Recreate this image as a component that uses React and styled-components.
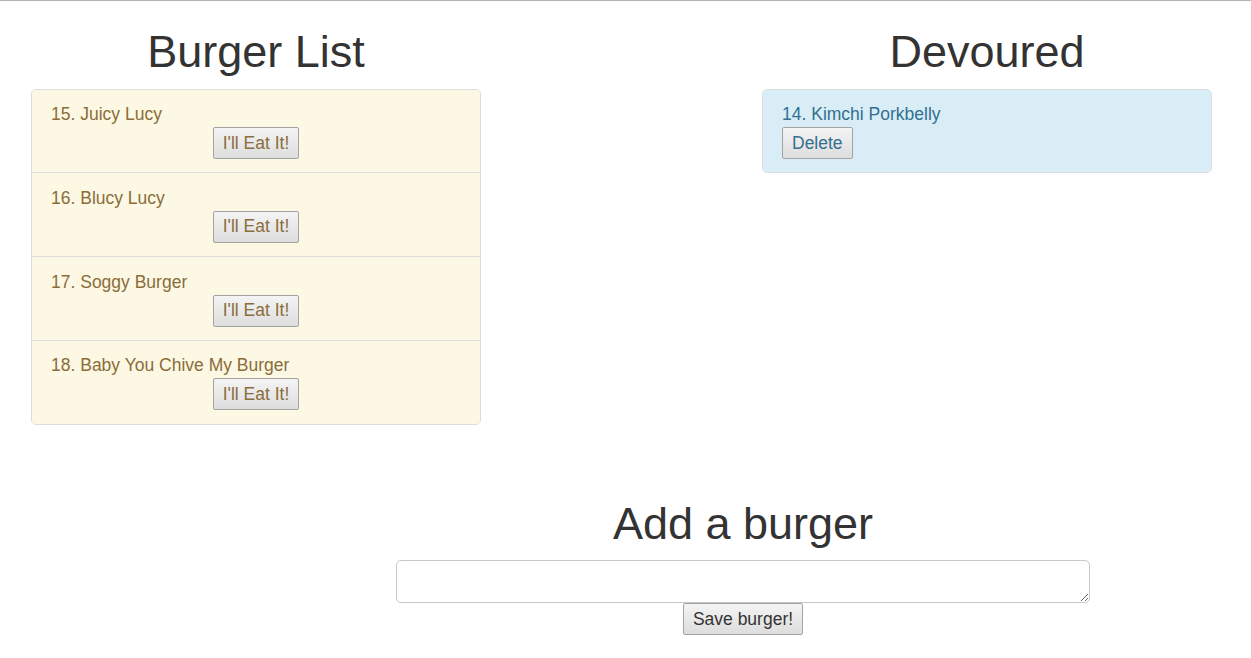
import React from "react";
import styled, { createGlobalStyle } from "styled-components";

const Global = createGlobalStyle`
  html, body { margin: 0; padding: 0; background: #fff; }
  body {
    font-family: "Liberation Sans", Arial, Helvetica, sans-serif;
    font-size: 17.5px;
    line-height: 25px;
    color: #333;
  }
`;

const Page = styled.div`
  border-top: 1px solid #b4b4b4;
  min-height: 657px;
`;

const TopRow = styled.div`
  display: flex;
  padding-left: 31px;
  gap: 281px;
`;

const Column = styled.section`
  width: 450px;
  display: flex;
  flex-direction: column;
`;

const Heading = styled.h1`
  margin: ${(p) => p.$mt || 26}px 0 12px;
  font-size: 45px;
  font-weight: 500;
  line-height: 49.5px;
  text-align: center;
  color: #333;
`;

const ListGroup = styled.ul`
  margin: 0;
  padding: 0;
  list-style: none;
  border: 1px solid #ddd;
  border-radius: 5px;
  overflow: hidden;
`;

const palette = {
  warning: { color: "#8a6d3b", bg: "#fcf8e3" },
  info: { color: "#31708f", bg: "#d9edf7" },
};

const Item = styled.li`
  padding: 12.5px 19px 13.25px;
  background: ${(p) => palette[p.$variant].bg};
  color: ${(p) => palette[p.$variant].color};
  border-top: 1px solid #ddd;
  display: flex;
  flex-direction: column;
  align-items: ${(p) => (p.$center ? "center" : "flex-start")};
  &:first-child { border-top: none; }
`;

const ItemText = styled.div`
  align-self: stretch;
  text-align: left;
  line-height: 25px;
  height: 25px;
`;

const Button = styled.button`
  font-family: inherit;
  font-size: 17.5px;
  line-height: 25px;
  height: 32px;
  padding: 0 9px;
  margin: 0;
  color: ${(p) => p.$color || "#333"};
  background: linear-gradient(#f4f4f4, #dddddd);
  border: 1px solid #a3a3a3;
  border-radius: 2px;
  cursor: pointer;
`;

const FormSection = styled.section`
  margin-left: 396px;
  width: 694px;
  display: flex;
  flex-direction: column;
  align-items: center;
`;

const TextArea = styled.textarea`
  display: block;
  box-sizing: border-box;
  width: 694px;
  height: 43px;
  margin: 0;
  border: 1px solid #c8c8c8;
  border-radius: 5px;
  font-family: inherit;
  font-size: 17.5px;
  background: #fff;
  resize: both;
`;

const burgers = [
  { id: 15, name: "Juicy Lucy" },
  { id: 16, name: "Blucy Lucy" },
  { id: 17, name: "Soggy Burger" },
  { id: 18, name: "Baby You Chive My Burger" },
];

const devoured = [{ id: 14, name: "Kimchi Porkbelly" }];

export default function App() {
  return (
    <Page>
      <Global />
      <TopRow>
        <Column>
          <Heading>Burger List</Heading>
          <ListGroup>
            {burgers.map((b) => (
              <Item key={b.id} $variant="warning" $center>
                <ItemText>
                  {b.id}. {b.name}
                </ItemText>
                <Button $color="#8a6d3b">I'll Eat It!</Button>
              </Item>
            ))}
          </ListGroup>
        </Column>
        <Column>
          <Heading>Devoured</Heading>
          <ListGroup>
            {devoured.map((b) => (
              <Item key={b.id} $variant="info">
                <ItemText>
                  {b.id}. {b.name}
                </ItemText>
                <Button $color="#31708f">Delete</Button>
              </Item>
            ))}
          </ListGroup>
        </Column>
      </TopRow>
      <FormSection>
        <Heading $mt={74}>Add a burger</Heading>
        <TextArea />
        <Button>Save burger!</Button>
      </FormSection>
    </Page>
  );
}
